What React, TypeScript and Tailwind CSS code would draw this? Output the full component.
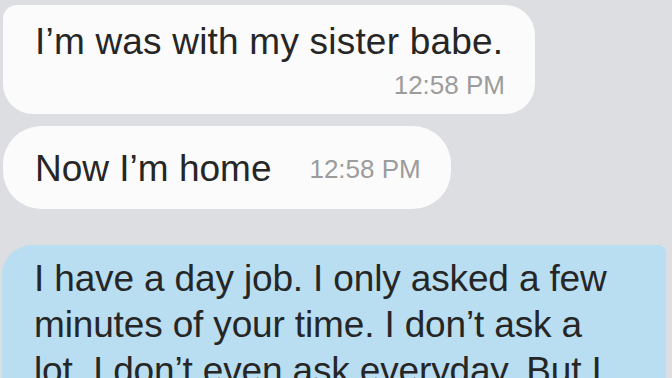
import React from 'react'

const font = { fontFamily: '"Liberation Sans", Arial, sans-serif' }

export default function App() {
  return (
    <div
      className="w-[672px] h-[378px] overflow-hidden bg-[#dddee1] flex flex-col items-start"
      style={font}
    >
      {/* incoming: two lines */}
      <div className="mt-[5px] ml-[3px] w-[532px] bg-[#fbfbfb] rounded-[30px] rounded-tl-[14px] pt-[15px] pb-[14px] pl-[32px] pr-[30px]">
        <div className="text-[37px] leading-[43px] text-[#262626] whitespace-nowrap tracking-[0.2px]">I’m was with my sister babe.</div>
        <div className="mt-[7px] text-right text-[26px] leading-[30px] text-[#9c9c9c]">12:58 PM</div>
      </div>

      {/* incoming: one line */}
      <div className="mt-[12px] ml-[3px] bg-[#fbfbfb] rounded-[38px] pt-[21px] pb-[19px] pl-[32px] pr-[30px] flex items-center gap-[38px]">
        <span className="text-[37px] leading-[43px] text-[#262626] whitespace-nowrap">Now I’m home</span>
        <span className="text-[26px] leading-[30px] text-[#9c9c9c] whitespace-nowrap">12:58 PM</span>
      </div>

      {/* outgoing */}
      <div className="mt-[36px] ml-[2px] w-[664px] bg-[#b9def1] rounded-[30px] rounded-tr-[8px] pt-[11px] pl-[32px] pr-[20px] pb-[20px]">
        <div className="text-[37px] leading-[46px] text-[#262626] whitespace-nowrap tracking-[-0.15px]">
          <div>I have a day job. I only asked a few</div>
          <div>minutes of your time. I don’t ask a</div>
          <div>lot. I don’t even ask everyday. But I</div>
        </div>
      </div>
    </div>
  )
}
